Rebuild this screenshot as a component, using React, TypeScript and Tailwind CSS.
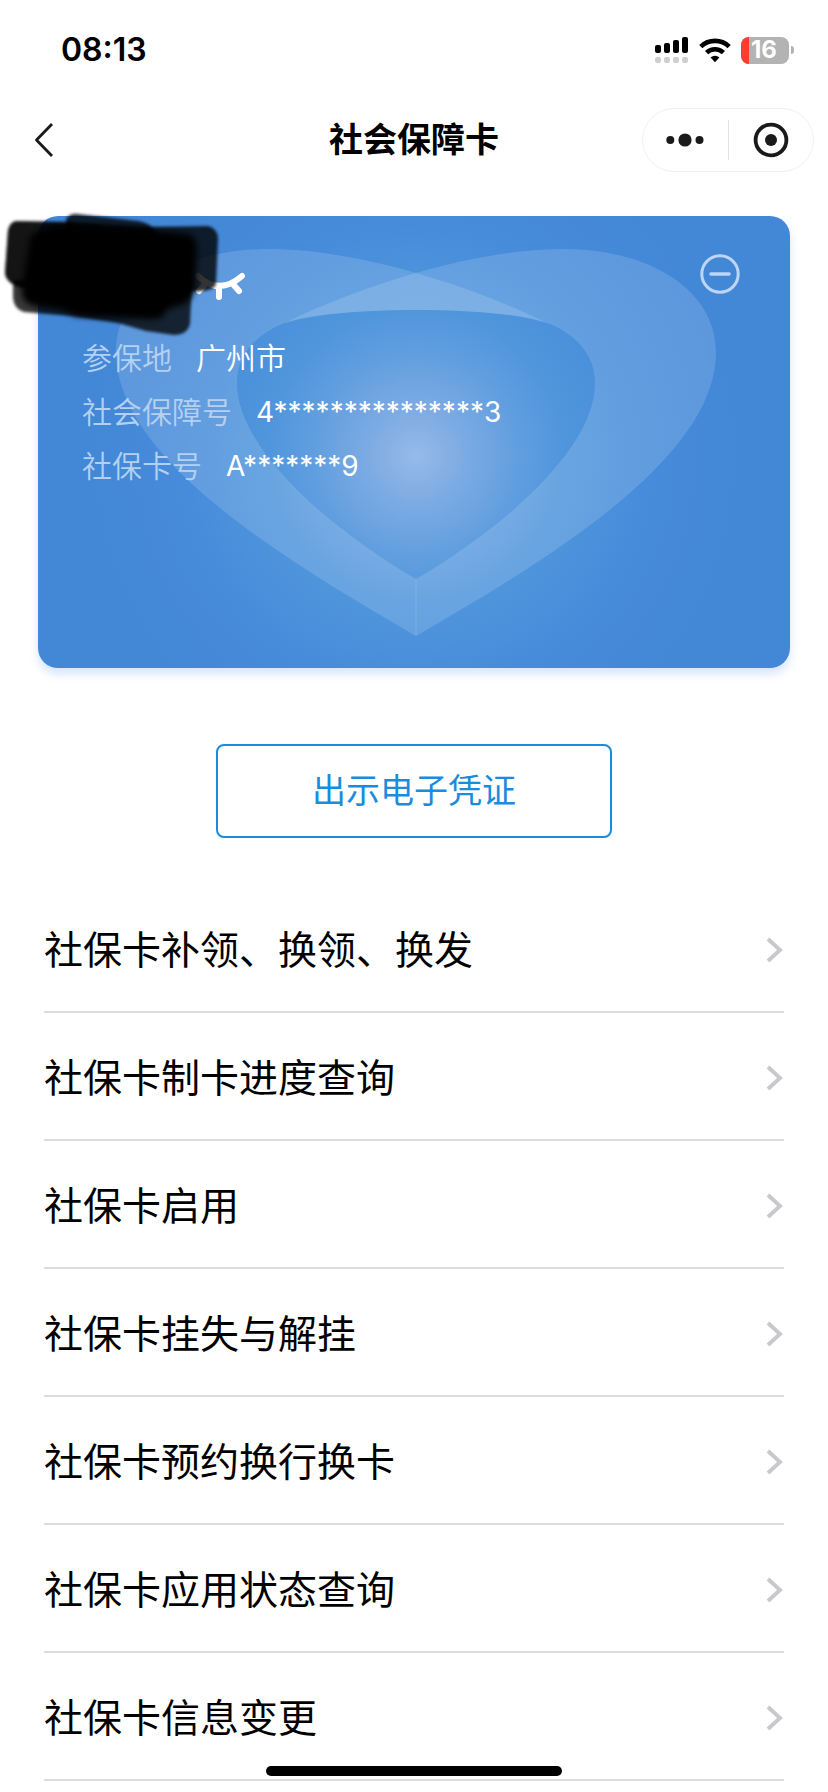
import React from "react";

const services = [
  "社保卡补领、换领、换发",
  "社保卡制卡进度查询",
  "社保卡启用",
  "社保卡挂失与解挂",
  "社保卡预约换行换卡",
  "社保卡应用状态查询",
  "社保卡信息变更",
];

const details = [
  { label: "参保地", value: "广州市", masked: false },
  { label: "社会保障号", value: "4***************3", masked: true },
  { label: "社保卡号", value: "A*******9", masked: true },
];

function StatusBar() {
  return (
    <div className="flex h-[100px] items-center justify-between pl-[61px] pr-[34px]">
      <time className="text-[32px] font-semibold leading-10">08:13</time>
      <div className="flex items-center gap-[10px]">
        <svg width="34" height="28" viewBox="0 0 34 28" aria-hidden="true">
          <g fill="#000">
            <rect x="0" y="9" width="6" height="8" rx="2" />
            <rect x="9" y="7" width="6" height="10" rx="2" />
            <rect x="18" y="4" width="6" height="13" rx="2" />
            <rect x="27" y="1" width="6" height="16" rx="2" />
          </g>
          <g fill="#cfcfcf">
            <rect x="0" y="21" width="6" height="6" rx="2" />
            <rect x="9" y="21" width="6" height="6" rx="2" />
            <rect x="18" y="21" width="6" height="6" rx="2" />
            <rect x="27" y="21" width="6" height="6" rx="2" />
          </g>
        </svg>
        <svg width="32" height="26" viewBox="0 0 32 26" aria-hidden="true">
          <g fill="none" stroke="#000" strokeWidth="4.6">
            <path d="M1.8 9.6 A20.4 20.4 0 0 1 30.2 9.6" />
            <path d="M7.6 15.6 A12.2 12.2 0 0 1 24.4 15.6" />
          </g>
          <path d="M16 25.2 L11.6 20.6 A6.4 6.4 0 0 1 20.4 20.6 Z" fill="#000" />
        </svg>
        <div className="flex items-center gap-[2px]">
          <div className="flex h-[27px] w-[48px] items-center overflow-hidden rounded-[8px] bg-[#b3b3b3]">
            <span className="h-full w-2 bg-[#fc3d34]" />
            <span className="pl-[2px] text-[24px] font-bold leading-none text-white">16</span>
          </div>
          <span className="h-2 w-[3px] rounded-r-full bg-[#b3b3b3]" />
        </div>
      </div>
    </div>
  );
}

function NavBar() {
  return (
    <header className="grid h-20 grid-cols-[1fr_auto_1fr] items-center px-[14px]">
      <button type="button" aria-label="返回" className="pl-[18px] justify-self-start">
        <svg width="24" height="36" viewBox="0 0 24 36" fill="none" stroke="#1a1a1a" strokeWidth="2.8">
          <path d="M20 2 L4.500 18 L20 34" strokeLinejoin="round" />
        </svg>
      </button>
      <h1 className="text-[34px] font-bold leading-10">社会保障卡</h1>
      <div className="flex h-16 w-[172px] items-center justify-self-end rounded-full border border-[#f0f0f0]">
        <button type="button" aria-label="更多" className="flex flex-1 justify-center">
          <svg width="38" height="14" viewBox="0 0 38 14" fill="#1a1a1a">
            <circle cx="4.300" cy="7" r="4" />
            <circle cx="19" cy="7" r="6.600" />
            <circle cx="33.500" cy="7" r="4" />
          </svg>
        </button>
        <span className="h-10 w-px bg-[#e2e2e2]" />
        <button type="button" aria-label="关闭" className="flex flex-1 justify-center">
          <svg width="36" height="36" viewBox="0 0 36 36">
            <circle cx="18" cy="18" r="15.400" fill="none" stroke="#1a1a1a" strokeWidth="3.800" />
            <circle cx="18" cy="18" r="6" fill="#1a1a1a" />
          </svg>
        </button>
      </div>
    </header>
  );
}

const lobe =
  "M378 420 C522 337 678 239 678 136 C678 74 612 33 525 33 C432 33 312 74 245 108 C276 97 332 94 378 94 C438 94 490 99 512 108 C540 120 557 140 557 167 C557 234 462 314 378 363 Z";

function CardArt() {
  return (
    <svg
      className="absolute inset-0 h-full w-full rounded-[20px]"
      viewBox="0 0 752 452"
      preserveAspectRatio="xMidYMid slice"
      aria-hidden="true"
    >
      <defs>
        <radialGradient id="glow" gradientUnits="userSpaceOnUse" cx="378" cy="240" r="320">
          <stop offset="0" stopColor="#97bae8" />
          <stop offset="0.15" stopColor="#7cabe3" />
          <stop offset="0.32" stopColor="#619edf" />
          <stop offset="0.46" stopColor="#5096dc" />
          <stop offset="0.72" stopColor="#478cda" />
          <stop offset="1" stopColor="#4387d7" />
        </radialGradient>
      </defs>
      <rect width="752" height="452" fill="url(#glow)" />
      <path d={lobe} fill="#fff" fillOpacity="0.14" />
      <path d={lobe} fill="#fff" fillOpacity="0.14" transform="translate(756 0) scale(-1 1)" />
      <path d="M378 363 V420" stroke="#fff" strokeOpacity="0.14" />
    </svg>
  );
}

function Redaction() {
  return (
    <svg
      className="pointer-events-none absolute -left-[38px] -top-[10px]"
      width="268"
      height="144"
      viewBox="0 206 268 144"
      aria-hidden="true"
    >
      <defs>
        <filter id="soft" x="-10%" y="-10%" width="120%" height="120%">
          <feGaussianBlur stdDeviation="1.600" />
        </filter>
        <filter id="softer" x="-10%" y="-10%" width="120%" height="120%">
          <feGaussianBlur stdDeviation="3" />
        </filter>
      </defs>
      <g filter="url(#soft)" fill="#000">
        <path
          d="M16 221 L64 222 L150 227 L208 226 Q217 228 218 238 L216 284 Q214 291 200 291 L130 292 L22 288 Q5 283 5 272 L8 230 Q10 222 16 221 Z"
          fillOpacity="0.8"
        />
        <path
          d="M16 221 L64 222 L100 225 L100 290 L22 288 Q5 283 5 272 L8 230 Q10 222 16 221 Z"
          fillOpacity="0.6"
        />
        <path
          d="M66 219 Q70 213 78 214 L138 221 Q154 224 156 234 L156 270 L66 260 Z"
          fillOpacity="0.8"
        />
        <path
          d="M13 280 L192 280 L190 324 Q187 335 174 335 L146 331 L118 323 L72 316 L24 312 Q14 309 13 298 Z"
          fillOpacity="0.78"
        />
      </g>
      <path
        filter="url(#softer)"
        d="M30 238 Q34 229 64 226 L150 230 L188 234 Q197 237 197 248 L195 286 Q193 302 178 306 L166 310 Q164 320 152 319 L76 316 L62 310 L34 306 Q20 302 22 288 Z"
        fill="#000"
      />
    </svg>
  );
}

function SocialCard() {
  return (
    <section className="relative mx-[38px] mt-9 h-[452px] rounded-[20px] shadow-[0_6px_10px_rgba(67,135,240,0.22)]">
      <CardArt />
      <div className="relative flex h-[115px] items-start pl-[154px] pr-[50px]">
        <button type="button" aria-label="显示姓名" className="mt-[54px]">
          <svg width="54" height="32" viewBox="0 0 54 32" fill="none" stroke="#fff" strokeWidth="6" strokeLinecap="round">
            <path d="M6 6 Q27 26 50 6" />
            <path d="M27 17 V27 M40 13 L47 21 M14 13 L7 21" />
          </svg>
        </button>
        <button type="button" aria-label="收起" className="ml-auto mt-[38px]">
          <svg width="40" height="40" viewBox="0 0 40 40" fill="none" stroke="#bdd6f5" strokeWidth="3">
            <circle cx="20" cy="20" r="18.200" />
            <path d="M11 20 H29" strokeWidth="3.600" strokeLinecap="round" />
          </svg>
        </button>
      </div>
      <Redaction />
      <dl className="relative pl-11 text-[30px] font-[350] leading-[54px] text-white">
        {details.map((item) => (
          <div key={item.label} className="flex gap-6">
            <dt className="text-[#b4d1f2]">{item.label}</dt>
            <dd className={item.masked ? "text-[28px] font-normal" : ""}>{item.value}</dd>
          </div>
        ))}
      </dl>
    </section>
  );
}

export default function App() {
  return (
    <main className="relative min-h-screen bg-white font-['Inter','Noto_Sans_CJK_SC',sans-serif] text-black" lang="zh-CN">
      <StatusBar />
      <NavBar />
      <SocialCard />
      <div className="flex justify-center pb-[47px] pt-[76px]">
        <button
          type="button"
          className="h-[94px] w-[396px] rounded-lg border-2 border-[#1b8bdc] text-[34px] leading-10 text-[#1b8bdc]"
        >
          出示电子凭证
        </button>
      </div>
      <nav className="px-11">
        <ul>
          {services.map((name) => (
            <li key={name} className="border-b-2 border-[#dcdcdc]">
              <a href="#" className="flex h-[126px] items-center justify-between pt-1 text-[39px] leading-[56px]">
                {name}
                <svg width="20" height="28" viewBox="0 0 20 28" fill="none" stroke="#c7c7cc" strokeWidth="3.800" aria-hidden="true">
                  <path d="M4 3 L16 14 L4 25" />
                </svg>
              </a>
            </li>
          ))}
        </ul>
      </nav>
      <div className="fixed inset-x-0 bottom-4 flex justify-center">
        <span className="h-[10px] w-[296px] rounded-full bg-black" />
      </div>
    </main>
  );
}
